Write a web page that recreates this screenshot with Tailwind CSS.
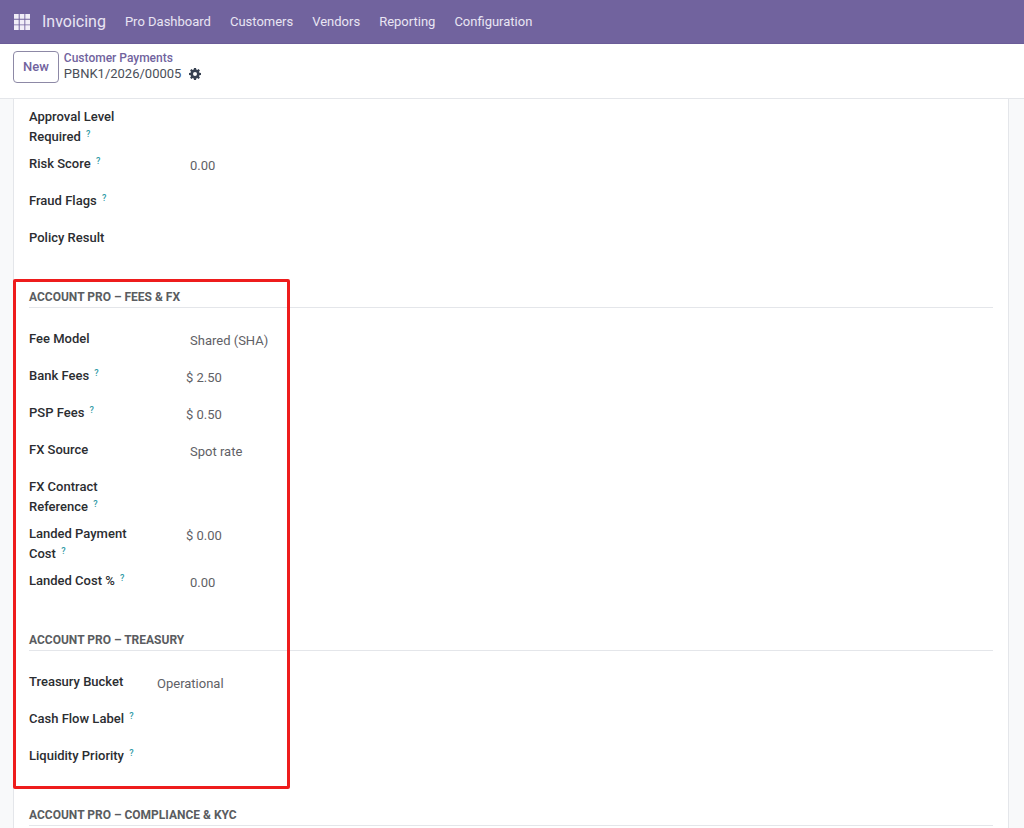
<!DOCTYPE html>
<html lang="en">
<head>
<meta charset="UTF-8"/>
<meta name="viewport" content="width=device-width, initial-scale=1.0"/>
<title>PBNK1/2026/00005 - Invoicing</title>
<script src="https://cdn.jsdelivr.net/npm/@tailwindcss/browser@4"></script>
</head>
<body class="h-screen flex flex-col overflow-hidden bg-[#f8f9fa] font-['Roboto',sans-serif] text-[13px] leading-5 text-[#5f6166]">

<!-- NAVBAR -->
<header class="h-11 shrink-0 flex items-center bg-[#71639e] border-b border-[#6b5c98] px-3.5 text-[#e9e5f3]">
  <button aria-label="Apps" class="mr-3">
    <svg class="size-4" viewBox="0 0 16 16" fill="#f1eef8"><path d="M0 0h4.7v4.7H0zM5.7 0h4.7v4.7H5.7zM11.3 0H16v4.7h-4.7zM0 5.7h4.7v4.7H0zM5.7 5.7h4.7v4.7H5.7zM11.3 5.7H16v4.7h-4.7zM0 11.3h4.7V16H0zM5.7 11.3h4.7V16H5.7zM11.3 11.3H16V16h-4.7z"/></svg>
  </button>
  <a href="#" class="text-base mr-[19px]">Invoicing</a>
  <nav class="flex gap-[19px]">
    <a href="#">Pro Dashboard</a>
    <a href="#">Customers</a>
    <a href="#">Vendors</a>
    <a href="#">Reporting</a>
    <a href="#">Configuration</a>
  </nav>
</header>

<!-- CONTROL PANEL -->
<div class="h-[55px] shrink-0 flex items-start gap-[5px] bg-white border-b border-[#e4e6ea] px-[13px] pt-[7px]">
  <button class="h-8 px-[9px] border border-[#8d89a6] rounded font-medium text-[#71639e]">New</button>
  <div class="-mt-px leading-4">
    <a href="#" class="block text-[12px] font-medium text-[#71639e]">Customer Payments</a>
    <div class="flex items-center gap-2 text-[#4a4f59]">
      <span>PBNK1/2026/00005</span>
      <button aria-label="Actions">
        <svg class="size-3" viewBox="0 0 12 12" fill="#374151" fill-rule="evenodd"><path d="M5 0h2l.35 1.6.9.4L9.6 1.1 10.9 2.4 10 3.75l.4.9L12 5v2l-1.6.35-.4.9.9 1.35-1.3 1.3L8.25 10l-.9.4L7 12H5l-.35-1.6-.9-.4-1.35.9-1.3-1.3L2 8.25l-.4-.9L0 7V5l1.6-.35.4-.9L1.1 2.4 2.4 1.1 3.75 2l.9-.4zM6 4a2 2 0 1 0 0 4a2 2 0 1 0 0-4z"/></svg>
      </button>
    </div>
  </div>
</div>

<!-- FORM SHEET -->
<main class="flex-1 min-h-0 ml-[13px] mr-[15px] bg-white border-x border-[#e4e6ea] px-[15px] pt-2">

  <section class="flex flex-col gap-[7px] mb-[29px]">
    <div class="flex min-h-[30px]">
      <label for="approval" class="w-[112px] mr-[49px] font-medium text-[#2b2d31]">Approval Level Required <sup class="ml-0.5 text-[9px] leading-none text-[#2f9aa5]">?</sup></label>
      <output id="approval"></output>
    </div>
    <div class="flex min-h-[30px]">
      <label for="risk" class="w-[112px] mr-[49px] font-medium text-[#2b2d31]">Risk Score <sup class="ml-0.5 text-[9px] leading-none text-[#2f9aa5]">?</sup></label>
      <output id="risk" class="pt-0.5">0.00</output>
    </div>
    <div class="flex min-h-[30px]">
      <label for="fraud" class="w-[112px] mr-[49px] font-medium text-[#2b2d31]">Fraud Flags <sup class="ml-0.5 text-[9px] leading-none text-[#2f9aa5]">?</sup></label>
      <output id="fraud"></output>
    </div>
    <div class="flex min-h-[30px]">
      <label for="policy" class="w-[112px] mr-[49px] font-medium text-[#2b2d31]">Policy Result</label>
      <output id="policy"></output>
    </div>
  </section>

  <div class="relative mb-[29px]">
    <!-- highlight frame -->
    <div class="absolute -left-4 -top-2 -bottom-[13px] w-[277px] border-[3px] border-[#ee1c1c] rounded-xs pointer-events-none"></div>

    <section class="mb-[29px]">
      <h2 class="mb-[21px] border-b border-[#e4e6ea] text-[12px] leading-5 font-bold text-[#5a5c60]">ACCOUNT PRO – FEES &amp; FX</h2>
      <div class="flex flex-col gap-[7px]">
        <div class="flex min-h-[30px]">
          <label for="feemodel" class="w-[112px] mr-[49px] font-medium text-[#2b2d31]">Fee Model</label>
          <output id="feemodel" class="pt-0.5">Shared (SHA)</output>
        </div>
        <div class="flex min-h-[30px]">
          <label for="bankfees" class="w-[112px] mr-[45px] font-medium text-[#2b2d31]">Bank Fees <sup class="ml-0.5 text-[9px] leading-none text-[#2f9aa5]">?</sup></label>
          <output id="bankfees" class="pt-0.5">$ 2.50</output>
        </div>
        <div class="flex min-h-[30px]">
          <label for="pspfees" class="w-[112px] mr-[45px] font-medium text-[#2b2d31]">PSP Fees <sup class="ml-0.5 text-[9px] leading-none text-[#2f9aa5]">?</sup></label>
          <output id="pspfees" class="pt-0.5">$ 0.50</output>
        </div>
        <div class="flex min-h-[30px]">
          <label for="fxsource" class="w-[112px] mr-[49px] font-medium text-[#2b2d31]">FX Source</label>
          <output id="fxsource" class="pt-0.5">Spot rate</output>
        </div>
        <div class="flex min-h-[30px]">
          <label for="fxref" class="w-[112px] mr-[49px] font-medium text-[#2b2d31]">FX Contract Reference <sup class="ml-0.5 text-[9px] leading-none text-[#2f9aa5]">?</sup></label>
          <output id="fxref"></output>
        </div>
        <div class="flex min-h-[30px]">
          <label for="landed" class="w-[112px] mr-[45px] font-medium text-[#2b2d31]">Landed Payment Cost <sup class="ml-0.5 text-[9px] leading-none text-[#2f9aa5]">?</sup></label>
          <output id="landed" class="pt-0.5">$ 0.00</output>
        </div>
        <div class="flex min-h-[30px]">
          <label for="landedpct" class="w-[112px] mr-[49px] font-medium text-[#2b2d31]">Landed Cost % <sup class="ml-0.5 text-[9px] leading-none text-[#2f9aa5]">?</sup></label>
          <output id="landedpct" class="pt-0.5">0.00</output>
        </div>
      </div>
    </section>

    <section>
      <h2 class="mb-[21px] border-b border-[#e4e6ea] text-[12px] leading-5 font-bold text-[#5a5c60]">ACCOUNT PRO – TREASURY</h2>
      <div class="flex flex-col gap-[7px]">
        <div class="flex min-h-[30px]">
          <label for="bucket" class="w-[112px] mr-4 font-medium text-[#2b2d31]">Treasury Bucket</label>
          <output id="bucket" class="pt-0.5">Operational</output>
        </div>
        <div class="flex min-h-[30px]">
          <label for="cashflow" class="w-[112px] mr-4 font-medium text-[#2b2d31]">Cash Flow Label <sup class="ml-0.5 text-[9px] leading-none text-[#2f9aa5]">?</sup></label>
          <output id="cashflow"></output>
        </div>
        <div class="flex min-h-[30px]">
          <label for="liquidity" class="w-[112px] mr-4 font-medium text-[#2b2d31]">Liquidity Priority <sup class="ml-0.5 text-[9px] leading-none text-[#2f9aa5]">?</sup></label>
          <output id="liquidity"></output>
        </div>
      </div>
    </section>
  </div>

  <section>
    <h2 class="border-b border-[#e4e6ea] text-[12px] leading-5 font-bold text-[#5a5c60]">ACCOUNT PRO – COMPLIANCE &amp; KYC</h2>
  </section>

</main>
</body>
</html>
